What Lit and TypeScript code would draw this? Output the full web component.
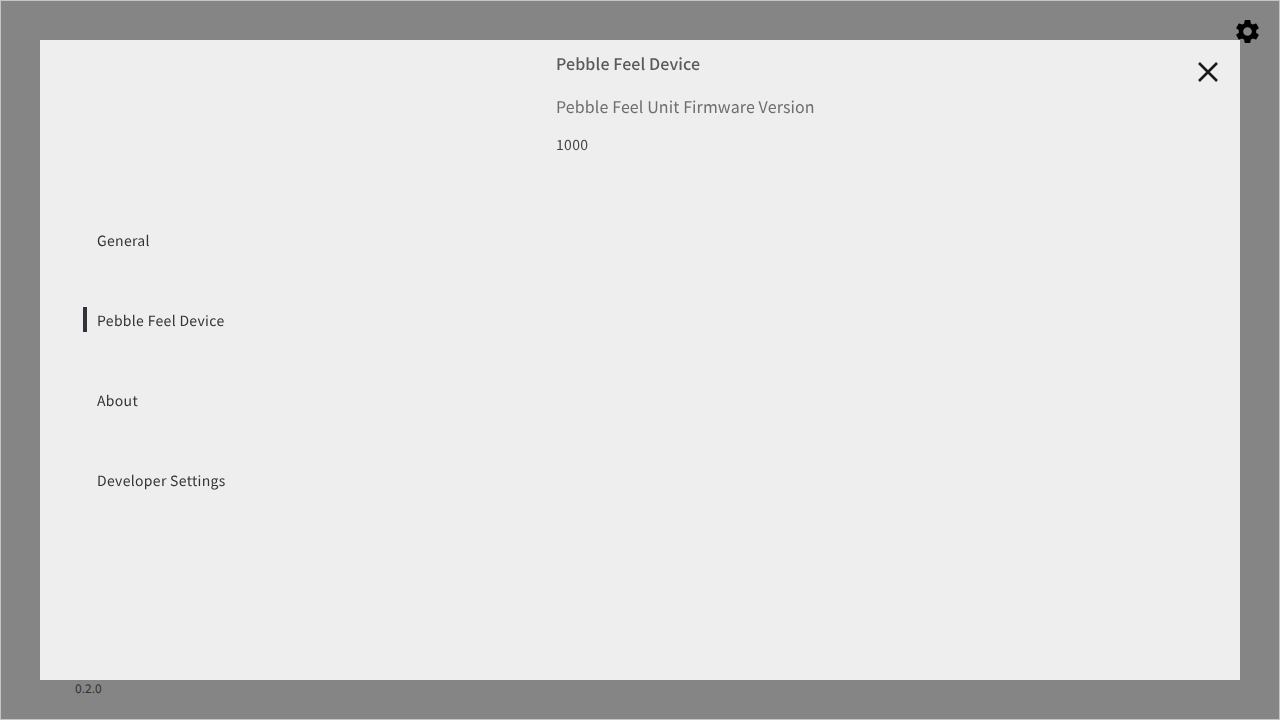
import { LitElement, html, css } from "lit";
import { customElement } from "lit/decorators.js";

const NAV = ["General", "Pebble Feel Device", "About", "Developer Settings"];

@customElement("app-root")
export class AppRoot extends LitElement {
  static styles = css`
    :host {
      display: block;
      position: relative;
      width: 1280px;
      height: 720px;
      overflow: hidden;
      box-sizing: border-box;
      background: #858585;
      border: 1px solid #c4c4c4;
      font-family: "Noto Sans CJK JP", "Noto Sans", sans-serif;
      color: #333;
      text-rendering: geometricPrecision;
    }
    .gear {
      position: absolute;
      left: 1232px;
      top: 16px;
      width: 29px;
      height: 29px;
      display: block;
    }
    .version {
      position: absolute;
      left: 74px;
      top: 679px;
      font-size: 12px;
      line-height: 17px;
      color: #333;
    }
    .modal {
      position: absolute;
      left: 39px;
      top: 39px;
      width: 1200px;
      height: 640px;
      background: #eee;
      display: grid;
      grid-template-columns: 516px 1fr;
      will-change: transform;
    }
    .close {
      position: absolute;
      right: 16px;
      top: 16px;
      width: 32px;
      height: 32px;
      display: block;
    }
    nav {
      display: flex;
      flex-direction: column;
      justify-content: center;
      padding-left: 43px;
      padding-bottom: 1px;
      box-sizing: border-box;
      height: 640px;
    }
    .item {
      height: 80px;
      display: flex;
      align-items: center;
      font-size: 14px;
      letter-spacing: 0.32px;
      color: #333;
    }
    .label {
      padding-top: 2px;
    }
    .mark {
      width: 4px;
      height: 25px;
      margin-right: 10px;
      background: transparent;
    }
    .item.active .mark {
      background: #32323c;
    }
    .content {
      display: flex;
      flex-direction: column;
      padding-top: 10px;
    }
    h1 {
      margin: 0;
      font-size: 16px;
      line-height: 26px;
      font-weight: 500;
      letter-spacing: 0.1px;
      color: #5a5a5a;
    }
    h2 {
      margin: 17px 0 0;
      font-size: 16px;
      line-height: 26px;
      font-weight: 400;
      letter-spacing: 0.12px;
      color: #6e6e6e;
    }
    p {
      margin: 15px 0 0;
      font-size: 14px;
      line-height: 22px;
      letter-spacing: 0.3px;
      color: #444;
    }
  `;

  render() {
    return html`
      <svg class="gear" viewBox="0 0 24 24" fill="#000">
        <path d="M19.14 12.94c.04-.3.06-.61.06-.94 0-.32-.02-.64-.07-.94l2.03-1.58a.49.49 0 0 0 .12-.61l-1.92-3.32a.49.49 0 0 0-.59-.22l-2.39.96c-.5-.38-1.03-.7-1.62-.94l-.36-2.54a.48.48 0 0 0-.48-.41h-3.84a.47.47 0 0 0-.47.41l-.36 2.54c-.59.24-1.13.57-1.62.94l-2.39-.96a.48.48 0 0 0-.59.22L2.74 8.87a.48.48 0 0 0 .12.61l2.03 1.58c-.05.3-.09.63-.09.94s.02.64.07.94l-2.03 1.58a.49.49 0 0 0-.12.61l1.92 3.32c.12.22.37.29.59.22l2.39-.96c.5.38 1.03.7 1.62.94l.36 2.54c.05.24.24.41.48.41h3.84c.24 0 .44-.17.47-.41l.36-2.54c.59-.24 1.13-.56 1.62-.94l2.39.96c.22.08.47 0 .59-.22l1.92-3.32a.48.48 0 0 0-.12-.61l-2.01-1.58zM12 15.6A3.6 3.6 0 1 1 12 8.4a3.6 3.6 0 0 1 0 7.2z"/>
      </svg>
      <div class="version">0.2.0</div>
      <div class="modal">
        <nav>
          ${NAV.map(
            (n) => html`<div class="item ${n === "Pebble Feel Device" ? "active" : ""}">
              <span class="mark"></span><span class="label">${n}</span>
            </div>`
          )}
        </nav>
        <section class="content">
          <h1>Pebble Feel Device</h1>
          <h2>Pebble Feel Unit Firmware Version</h2>
          <p>1000</p>
        </section>
        <svg class="close" viewBox="0 0 32 32" fill="none" stroke="#1a1a1a" stroke-width="2.6">
          <path d="M7 7 L25 25 M25 7 L7 25"/>
        </svg>
      </div>
    `;
  }
}
